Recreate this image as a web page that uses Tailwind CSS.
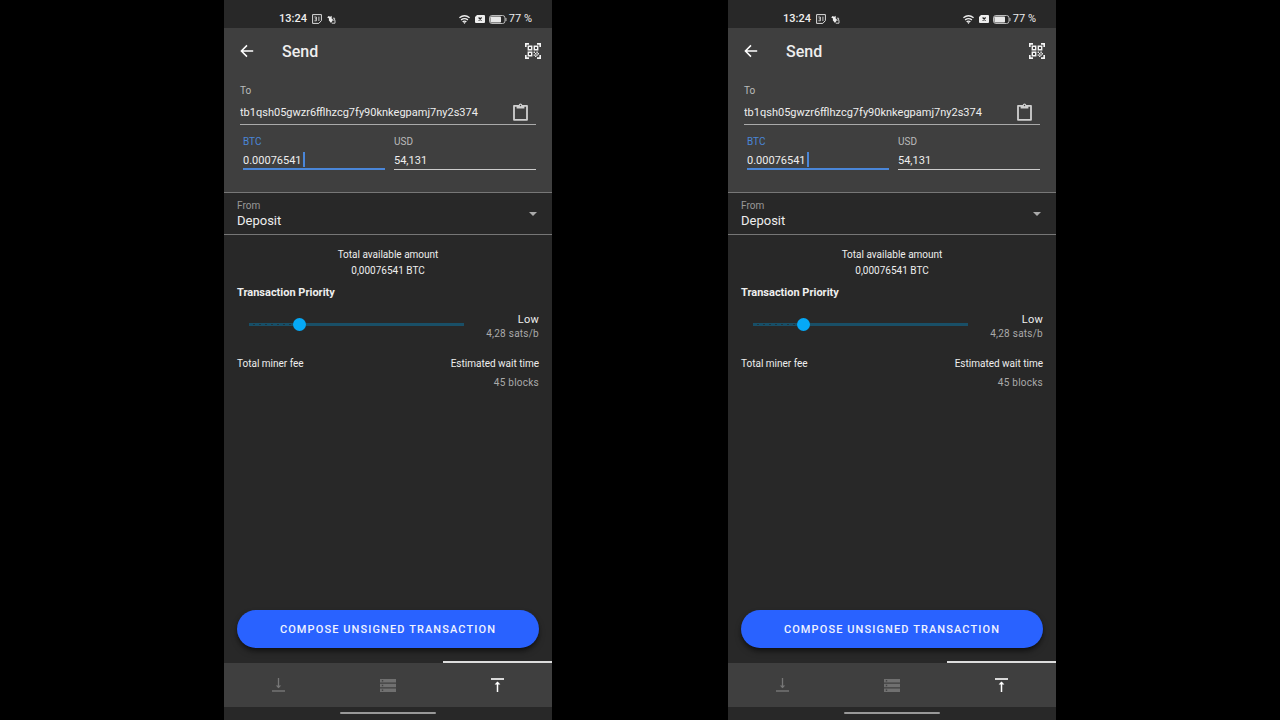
<!DOCTYPE html>
<html lang="en">
<head>
<meta charset="utf-8">
<meta name="viewport" content="width=device-width, initial-scale=1">
<title>Send</title>
<script src="https://cdn.jsdelivr.net/npm/@tailwindcss/browser@4"></script>
</head>
<body class="bg-black font-[Roboto,sans-serif] text-[#eeeeee]">
<main id="phones" class="flex min-h-screen flex-wrap justify-center gap-44"></main>

<template id="phone">
<section class="flex w-[328px] flex-col bg-[#282828]">
  <div class="flex h-7 items-center justify-between pt-[10px] pr-5 pl-[55px] text-[11px] leading-4">
    <div class="flex items-center gap-[5px]">
      <span class="font-medium">13:24</span>
      <svg class="size-[10px]" viewBox="0 0 10 10" fill="none" stroke="#ddd"><path d="M.6.6h8.8v6L6.8 9.4H.6z"/><path d="M2.4 3h2v3.8h-2M2.8 4.9h1.6M6.9 2.6V7" stroke-width=".9"/></svg>
      <svg class="size-[9px]" viewBox="0 0 9 9"><path d="M.2 2.4 1.6 1l1.6.7L4.6.8l.2 3 1.4 1L4 8 1.8 5.2 2 3.4z" fill="#eee"/><path d="M5.8 3.2h1.8v2H6.2m1.8 0v3H4.8" fill="none" stroke="#ccc"/></svg>
    </div>
    <div class="flex items-center">
      <svg class="mr-[5px] h-[9px] w-[11px]" viewBox="0 0 11 9" fill="none" stroke="#eeeeee" stroke-width="1.4"><path d="M.4 2.8Q5.5-1.2 10.6 2.8M2.1 4.9q3.4-2.6 6.8 0M3.6 6.8q1.9-1.4 3.8 0"/><path d="M4.2 7.2h2.6L5.5 8.9z" fill="#eeeeee" stroke="none"/></svg>
      <svg class="mr-1 h-2 w-[10px]" viewBox="0 0 10 8"><path d="M2 0h7q1 0 1 1v6q0 1-1 1H1q-1 0-1-1V2z" fill="#eee"/><path d="m3.6 2.5 3 3m0-3-3 3" stroke="#222" stroke-width="1.2"/></svg>
      <svg class="mr-[2px] h-[9px] w-[18px]" viewBox="0 0 18 9"><rect x=".5" y=".5" width="15.5" height="8" rx="2.4" fill="none" stroke="#bbb"/><rect x="1.4" y="1.4" width="10.6" height="6.2" rx=".8" fill="#e8e8e8"/><path d="M17 3v3" stroke="#bbb"/></svg>
      <span>77 %</span>
    </div>
  </div>

  <header class="border-b border-[#777777] bg-[#3f3f3f] pb-[22px]">
    <div class="flex h-[46px] items-center pr-[11px] pl-4">
      <button type="button" aria-label="Back"><svg class="size-[14px]" viewBox="0 0 14 14" fill="none" stroke="#fff" stroke-width="1.5"><path d="M13.2 7H1.6M7 1.4 1.4 7 7 12.6"/></svg></button>
      <h1 class="ml-7 pt-[2px] text-base font-medium">Send</h1>
      <button type="button" aria-label="Scan QR code" class="ml-auto"><svg class="size-4" viewBox="0 0 16 16" fill="none" stroke="#f4f4f4" stroke-width="1.7"><path d="M.8 4V.8H4M12 .8h3.2V4M15.2 12v3.2H12M4 15.2H.8V12"/><path d="M3.3 3.3h3.4v3.4H3.3zM9.3 3.3h3.4v3.4H9.3zM3.3 9.3h3.4v3.4H3.3z" stroke-width="1.4"/><path d="M8.6 8.6H10V10H8.6zM11.4 8.6h1.4V10h-1.4zM10 10h1.4v1.4H10zM12.6 10H14v1.4h-1.4zM8.6 11.4H10v1.4H8.6zM11.4 11.4h1.4v1.4h-1.4zM10 12.6h1.4V14H10z" fill="#e4e4e4" stroke="none"/></svg></button>
    </div>
    <div class="px-4 pt-[11px]">
      <div class="relative">
        <label class="block text-[10px] leading-3 text-[#bbbbbb]">To
          <input type="text" value="tb1qsh05gwzr6fflhzcg7fy90knkegpamj7ny2s374" class="block h-7 w-full border-b border-[#aaaaaa] pt-1 pr-8 text-[11px] text-[#eeeeee] outline-none">
        </label>
        <button type="button" aria-label="Paste" class="absolute right-2 bottom-1"><svg class="h-[18px] w-[15px]" viewBox="0 0 15 18" fill="none" stroke="#cfcfcf"><path d="M1 2.8h13v14H1z" stroke-width="1.8" stroke-linejoin="round"/><path d="M3.6 2.2h2Q6 .4 7.5.4T9.4 2.2h2v3.2H3.6z" fill="#cfcfcf" stroke="none"/><circle cx="7.5" cy="2.5" r=".7" fill="#3f3f3f" stroke="none"/></svg></button>
      </div>
      <div class="mt-[11px] flex gap-[9px] pl-[3px] text-[10px] leading-3">
        <label class="relative min-w-0 flex-1 text-[#4a86d8]">BTC
          <input type="text" value="0.00076541" class="block h-[22px] w-full border-b-2 border-[#4a86d8] pt-1 text-[11px] text-[#eeeeee] outline-none">
          <span class="absolute bottom-[3px] left-[60px] h-[15px] w-[2px] bg-[#4a86d8]"></span>
        </label>
        <label class="min-w-0 flex-1 text-[#bbbbbb]">USD
          <input type="text" value="54,131" class="block h-[22px] w-full border-b border-[#cccccc] pt-1 text-[11px] text-[#eeeeee] outline-none">
        </label>
      </div>
    </div>
  </header>

  <label class="relative block border-b border-[#777777] px-[13px] pt-[7px] pb-[5px] text-[10px] leading-3 text-[#999999]">From
    <select class="mt-px block h-4 w-full appearance-none text-[13px] leading-4 text-[#eeeeee] outline-none"><option>Deposit</option></select>
    <svg class="pointer-events-none absolute top-[19px] right-[15px] h-1 w-2" viewBox="0 0 8 4"><path d="M0 0h8L4 4z" fill="#aaa"/></svg>
  </label>

  <div class="flex flex-1 flex-col px-[13px] pt-3 pb-[13px] text-[10px] leading-4">
    <p class="text-center">Total available amount</p>
    <p class="text-center">0,00076541 BTC</p>
    <h2 class="mt-[6px] text-[11px] font-bold">Transaction Priority</h2>
    <div class="mt-3 flex items-start justify-between pl-3">
      <input type="range" min="0" max="100" value="22" aria-label="Transaction Priority" class="h-[22px] w-[215px] appearance-none bg-transparent [&::-webkit-slider-runnable-track]:h-[3px] [&::-webkit-slider-runnable-track]:bg-[repeating-linear-gradient(90deg,#154e68_0_4px,#20323a_4px_6px)] [&::-webkit-slider-runnable-track]:bg-[#194f67] [&::-webkit-slider-runnable-track]:bg-[length:44px_1px] [&::-webkit-slider-runnable-track]:bg-[position:0_1px] [&::-webkit-slider-runnable-track]:bg-no-repeat [&::-webkit-slider-thumb]:mt-[-5px] [&::-webkit-slider-thumb]:size-[13px] [&::-webkit-slider-thumb]:appearance-none [&::-webkit-slider-thumb]:rounded-full [&::-webkit-slider-thumb]:bg-[#05a9f7]">
      <div class="text-right leading-[14px] tracking-wide">
        <p class="text-[11px]">Low</p>
        <p class="text-[#aaaaaa]">4,28 sats/b</p>
      </div>
    </div>
    <div class="mt-[15px] flex justify-between">
      <p>Total miner fee</p>
      <div class="text-right">
        <p>Estimated wait time</p>
        <p class="mt-[3px] tracking-wide text-[#aaaaaa]">45 blocks</p>
      </div>
    </div>
    <button type="button" class="mt-auto h-[38px] rounded-full bg-[#2962ff] pt-[2px] text-[11px] font-medium tracking-widest text-[#f0f3ff] shadow-md shadow-black/50">COMPOSE UNSIGNED TRANSACTION</button>
  </div>

  <nav class="grid grid-cols-3">
    <button type="button" aria-label="Receive" class="flex h-[46px] items-center justify-center border-t-2 border-[#282828] bg-[#3f3f3f]"><svg class="h-[14px] w-[13px]" viewBox="0 0 13 14" fill="none" stroke="#777"><path d="M6.5 0v9.5" stroke-width="1.3"/><path d="m3.8 7.4 2.7 2.8 2.7-2.8z" fill="#777" stroke="none"/><path d="M0 13h13" stroke-width="1.4"/></svg></button>
    <button type="button" aria-label="Accounts" class="flex h-[46px] items-center justify-center border-t-2 border-[#282828] bg-[#3f3f3f]"><svg class="h-[13px] w-4" viewBox="0 0 16 13"><path d="M0 0h16v3.6H0zM0 4.7h16v3.6H0zM0 9.4h16V13H0z" fill="#707070"/><path d="M1.8 1.1h1.4v1.4H1.8zM1.8 5.8h1.4v1.4H1.8zM1.8 10.5h1.4v1.4H1.8z" fill="#444"/></svg></button>
    <button type="button" aria-label="Send" aria-current="page" class="flex h-[46px] items-center justify-center border-t-2 border-[#dddddd] bg-[#3f3f3f]"><svg class="h-[14px] w-[13px]" viewBox="0 0 13 14" fill="none" stroke="#fff"><path d="M0 1h13" stroke-width="1.6"/><path d="M6.5 14V4.5" stroke-width="1.5"/><path d="m3.6 6.6 2.9-3.2 2.9 3.2z" fill="#fff" stroke="none"/></svg></button>
  </nav>
  <div class="flex h-[13px] items-start justify-center pt-[5px]"><span class="h-[2px] w-24 rounded-full bg-[#999999]"></span></div>
</section>
</template>

<script>
  const phones = document.getElementById('phones');
  const phone = document.getElementById('phone');
  for (let i = 0; i < 2; i++) phones.append(phone.content.cloneNode(true));
</script>
</body>
</html>
